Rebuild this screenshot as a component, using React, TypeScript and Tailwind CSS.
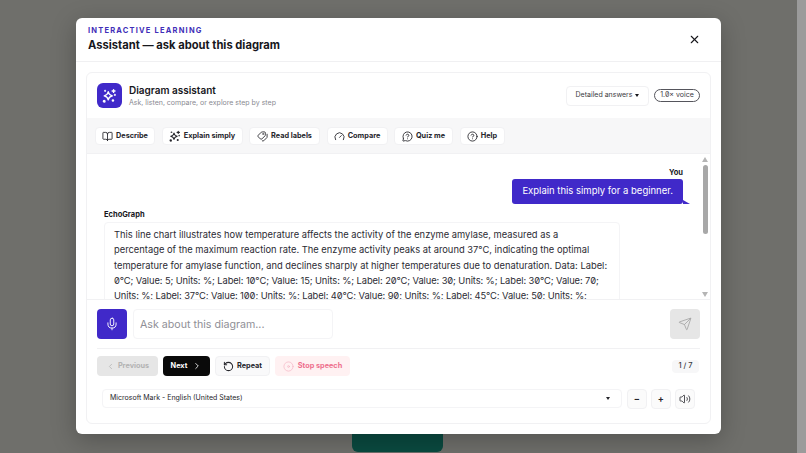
import { useState } from "react";
import {
  BookOpen,
  ChevronLeft,
  ChevronRight,
  CircleHelp,
  Disc,
  Gauge,
  MessageCircleQuestion,
  Mic,
  RotateCcw,
  Send,
  Tags,
  Volume2,
  X,
} from "lucide-react";

const Sparkle = ({ size = 14 }: { size?: number }) => (
  <svg width={size} height={size} viewBox="0 0 24 24" fill="none" stroke="currentColor" strokeWidth="2.2" strokeLinecap="round" strokeLinejoin="round">
    <path d="M10 6c.7 4 2.5 5.8 6.5 6.5-4 .7-5.8 2.5-6.5 6.5-.7-4-2.5-5.8-6.5-6.5 4-.7 5.800-2.500 6.500-6.500Z" />
    <path d="M18.500 2.500v4.500M16.200 4.800h4.600" />
    <circle cx="20.500" cy="11" r="0.6" />
    <circle cx="5" cy="4.500" r="0.6" />
    <circle cx="3.500" cy="21" r="1.300" />
    <circle cx="17.500" cy="20" r="1" />
  </svg>
);

const tools = [
  { label: "Describe", w: "w-[60px]", icon: <BookOpen size={11} strokeWidth={1.9} /> },
  { label: "Explain simply", w: "w-[81px]", icon: <Sparkle size={12} /> },
  { label: "Read labels", w: "w-[71px]", icon: <Tags size={11} strokeWidth={1.9} className="-scale-x-100" /> },
  { label: "Compare", w: "w-[61px]", icon: <Gauge size={11} strokeWidth={1.9} /> },
  { label: "Quiz me", w: "w-[59px]", icon: <MessageCircleQuestion size={11} strokeWidth={1.9} /> },
  { label: "Help", w: "w-[45px]", icon: <CircleHelp size={11} strokeWidth={1.9} /> },
];

const answer =
  "This line chart illustrates how temperature affects the activity of the enzyme amylase, measured as a percentage of the maximum reaction rate. The enzyme activity peaks at around 37°C, indicating the optimal temperature for amylase function, and declines sharply at higher temperatures due to denaturation. Data: Label: ";
const answerData =
  "0°C; Value: 5; Units: %; Label: 10°C; Value: 15; Units: %; Label: 20°C; Value: 30; Units: %; Label: 30°C; Value: 70; Units: %; Label: 37°C; Value: 100; Units: %; Label: 40°C; Value: 90; Units: %; Label: 45°C; Value: 50; Units: %; Label: 50°C; Value: 10; Units: %.";

export default function App() {
  const [question, setQuestion] = useState("");

  return (
    <div className="relative flex h-[453px] w-full justify-center overflow-hidden bg-[#6f6f6b] font-['Inter',sans-serif] slashed-zero">
      {/* page behind the dialog */}
      <div className="absolute bottom-[1px] left-[352px] h-[24px] w-[91px] rounded-b-md bg-[#0a4a40]" />
      <div className="absolute bottom-0 right-0 top-0 w-[9px] bg-[#9b9b9b]" />

      <div className="absolute left-[76px] top-[18px] flex h-[416px] w-[645px] flex-col rounded-md bg-white shadow-[0_6px_24px_rgba(0,0,0,0.25)]">
        <div className="flex h-[44px] items-start justify-between border-b border-[#f0f0f2] pl-3 pr-[20px] pt-[8px]">
          <div>
            <div className="text-[7.5px] font-bold uppercase leading-[10px] tracking-[0.16em] text-[#3f2fb8]">Interactive learning</div>
            <div className="mt-[1px] text-[11.2px] font-bold leading-[16px] text-[#17171c]">Assistant — ask about this diagram</div>
          </div>
          <X size={13} strokeWidth={2} className="mt-[7px] text-[#17171c]" />
        </div>

        <div className="mx-[10px] mt-[10px] flex h-[352px] flex-col rounded-md border border-[#f1f1f3]">
          <div className="flex h-[45px] items-center justify-between pl-[10px] pr-[10px]">
            <div className="flex items-center gap-[7px]">
              <div className="flex h-[25px] w-[25px] items-center justify-center rounded-md bg-[#4029c9] text-white">
                <Sparkle size={15} />
              </div>
              <div className="-mt-[1px]">
                <div className="text-[10px] font-semibold leading-[14px] text-[#17171c]">Diagram assistant</div>
                <div className="text-[7px] leading-[11px] text-[#8a8a92]">Ask, listen, compare, or explore step by step</div>
              </div>
            </div>
            <div className="flex items-center gap-[5px]">
              <div className="flex h-[20px] w-[83px] items-center justify-center gap-[3px] rounded-sm border border-[#f1f1f3] text-[7px] text-[#3a3a42]">
                Detailed answers <span className="h-0 w-0 border-x-[2.5px] border-t-[3px] border-x-transparent border-t-[#17171c]" />
              </div>
              <div className="flex h-[13px] w-[46px] items-center justify-center rounded-full border border-[#55555c] text-[7px] text-[#3a3a42]">1.0× voice</div>
            </div>
          </div>

          <div className="flex h-[36px] items-center gap-[6.5px] border-b border-[#f1f1f3] bg-[#f7f7f8] px-[8px] pt-[1px]">
            {tools.map((t) => (
              <button key={t.label} className={`flex h-[18px] items-center justify-center gap-[3px] rounded-sm border border-[#f1f1f3] bg-white text-[7.3px] font-bold text-[#25252b] ${t.w}`}>
                {t.icon}
                <span>{t.label}</span>
              </button>
            ))}
          </div>

          <div className="flex h-[145px] overflow-hidden">
            <div className="min-w-0 flex-1 overflow-hidden pl-[17px] pr-[18px] pt-[14px]">
              <div className="flex flex-col items-end">
                <div className="text-[7.5px] font-bold leading-[10px] text-[#17171c]">You</div>
                <div className="relative mt-[1px] flex h-[25px] items-center rounded-[3px] bg-[#4029c9] px-[10px] text-[9.5px] text-white">
                  Explain this simply for a beginner.
                  <span className="absolute -right-[7px] bottom-0 h-0 w-0 border-l-[7px] border-t-[4px] border-l-[#4029c9] border-t-transparent" />
                </div>
              </div>
              <div className="mt-[6px] text-[7.5px] font-bold leading-[10px] text-[#17171c]">EchoGraph</div>
              <div className="mt-[2px] w-[516px] rounded-sm border border-[#f4f4f6] px-[9px] pb-[5px] pt-[4px] text-[9.35px] leading-[15.3px] text-[#2b2b33]">
                {answer}
                <span className="tracking-[-0.1px]">{answerData}</span>
              </div>
            </div>
            <div className="flex w-[9px] flex-col items-center pr-[1px] pt-[3px]">
              <span className="h-0 w-0 border-x-[3px] border-b-[5px] border-x-transparent border-b-[#b5b5b5]" />
              <div className="mt-[3px] h-[69px] w-[5px] rounded-full bg-[#a8a8a8]" />
              <span className="mb-[2px] mt-auto h-0 w-0 border-x-[3px] border-t-[5px] border-x-transparent border-t-[#b5b5b5]" />
            </div>
          </div>

          <div className="flex h-[49px] items-center justify-between border-t border-[#f1f1f3] px-[10px]">
            <div className="flex items-center gap-[6px]">
              <button className="flex h-[30px] w-[30px] items-center justify-center rounded-sm bg-[#4029c9] text-white">
                <Mic size={14} strokeWidth={1.6} />
              </button>
              <input
                value={question}
                onChange={(e) => setQuestion(e.target.value)}
                placeholder="Ask about this diagram..."
                className="h-[30px] w-[200px] rounded-sm border border-[#f4f4f6] px-[6px] text-[10.65px] outline-none placeholder:text-[#8f8f96]"
              />
            </div>
            <button className="flex h-[30px] w-[30px] items-center justify-center rounded-sm bg-[#e6e6e6] text-[#a3a3a3]">
              <Send size={14} strokeWidth={1.4} />
            </button>
          </div>

          <div className="mx-[10px] flex h-[36px] items-center justify-between border-t border-[#f1f1f3] pb-[1px]">
            <div className="flex items-center gap-[5px]">
              <button className="flex h-[20px] w-[61px] items-center justify-center gap-[3px] rounded-sm bg-[#e6e6e6] text-[7.3px] font-bold text-[#b3b3b3]">
                <ChevronLeft size={9} strokeWidth={2} /> Previous
              </button>
              <button className="flex h-[20px] w-[47px] items-center justify-center gap-[5px] rounded-sm bg-[#0a0a0a] text-[7.3px] font-bold text-white">
                Next <ChevronRight size={10} strokeWidth={2} />
              </button>
              <button className="flex h-[20px] w-[55px] items-center justify-center gap-[3px] rounded-sm border border-[#f1f1f3] bg-[#f9f9fa] text-[7.3px] font-bold text-[#25252b]">
                <RotateCcw size={11} strokeWidth={2.2} /> Repeat
              </button>
              <button className="flex h-[20px] w-[75px] items-center justify-center gap-[4px] rounded-sm bg-[#fff1f2] text-[7.3px] font-bold text-[#ee6f8d]">
                <Disc size={11} strokeWidth={1.5} className="text-[#f5b5c5]" /> Stop speech
              </button>
            </div>
            <div className="mr-[1px] flex h-[13px] w-[27px] items-center justify-center rounded-sm bg-[#f7f7f8] text-[7.5px] font-medium text-[#3a3a42]">1 / 7</div>
          </div>

          <div className="mx-[10px] flex h-[29px] items-center gap-[5px] pl-[5px] pr-[5px]">
            <div className="flex h-[19px] flex-1 items-center justify-between rounded-sm border border-[#f4f4f6] pl-[7px] pr-[11px] text-[7px] text-[#25252b]">
              Microsoft Mark - English (United States)
              <span className="h-0 w-0 border-x-[2.5px] border-t-[3px] border-x-transparent border-t-[#25252b]" />
            </div>
            <div className="flex items-center gap-[3.5px]">
              <button className="flex h-[20px] w-[20.5px] items-center justify-center rounded-sm border border-[#f1f1f3] bg-[#fbfbfb] text-[9px] font-bold text-[#25252b]">−</button>
              <button className="flex h-[20px] w-[20.5px] items-center justify-center rounded-sm border border-[#f1f1f3] bg-[#fbfbfb] text-[9px] font-bold text-[#25252b]">+</button>
              <button className="flex h-[20px] w-[20.5px] items-center justify-center rounded-sm border border-[#f1f1f3] bg-[#fbfbfb] text-[#25252b]">
                <Volume2 size={12} strokeWidth={1.6} />
              </button>
            </div>
          </div>
        </div>
      </div>
    </div>
  );
}
